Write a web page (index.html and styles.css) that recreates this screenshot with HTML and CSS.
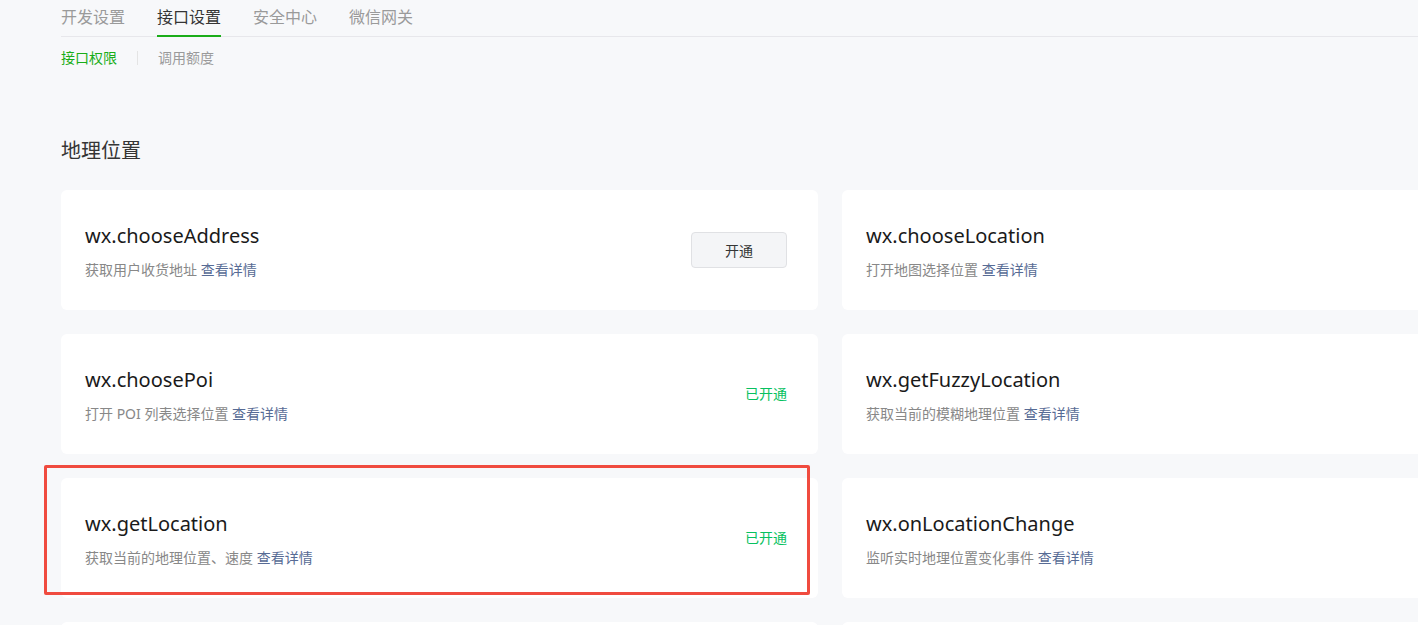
FILE: index.html
```html
<!DOCTYPE html>
<html lang="zh-CN">
<head>
<meta charset="utf-8">
<title>接口设置</title>
<link rel="stylesheet" href="styles.css">
</head>
<body>
<div class="page">
  <nav class="tabs">
    <a class="tab">开发设置</a>
    <a class="tab active">接口设置</a>
    <a class="tab">安全中心</a>
    <a class="tab">微信网关</a>
  </nav>
  <div class="subtabs">
    <a class="subtab active">接口权限</a>
    <span class="sep"></span>
    <a class="subtab">调用额度</a>
  </div>
  <h2 class="section-title">地理位置</h2>
  <div class="grid">
    <div class="card">
      <div class="info">
        <div class="api">wx.chooseAddress</div>
        <div class="desc">获取用户收货地址 <a class="link">查看详情</a></div>
      </div>
      <button class="btn">开通</button>
    </div>
    <div class="card">
      <div class="info">
        <div class="api">wx.chooseLocation</div>
        <div class="desc">打开地图选择位置 <a class="link">查看详情</a></div>
      </div>
    </div>
    <div class="card">
      <div class="info">
        <div class="api">wx.choosePoi</div>
        <div class="desc">打开 POI 列表选择位置 <a class="link">查看详情</a></div>
      </div>
      <span class="status">已开通</span>
    </div>
    <div class="card">
      <div class="info">
        <div class="api">wx.getFuzzyLocation</div>
        <div class="desc">获取当前的模糊地理位置 <a class="link">查看详情</a></div>
      </div>
    </div>
    <div class="card highlighted">
      <div class="info">
        <div class="api">wx.getLocation</div>
        <div class="desc">获取当前的地理位置、速度 <a class="link">查看详情</a></div>
      </div>
      <span class="status">已开通</span>
      <span class="mark"></span>
    </div>
    <div class="card">
      <div class="info">
        <div class="api">wx.onLocationChange</div>
        <div class="desc">监听实时地理位置变化事件 <a class="link">查看详情</a></div>
      </div>
    </div>
    <div class="card"></div>
    <div class="card"></div>
  </div>
</div>
</body>
</html>
```

FILE: styles.css
```css
html, body {
  margin: 0;
  padding: 0;
  background: #f7f8fa;
  overflow: hidden;
  height: 100%;
}
body {
  font-family: "Noto Sans", "Noto Sans CJK SC", sans-serif;
  color: #353535;
}
.page {
  padding: 6px 0 0 61px;
}
.tabs {
  display: flex;
  gap: 32px;
  border-bottom: 1px solid #e7e7eb;
}
.tab {
  font-size: 16px;
  line-height: 22px;
  padding-bottom: 7px;
  border-bottom: 2px solid transparent;
  margin-bottom: -1px;
  color: #9a9a9a;
}
.tab.active {
  color: #353535;
  border-bottom-color: #1aad19;
}
.subtabs {
  display: flex;
  align-items: center;
  margin-top: 11px;
  height: 20px;
}
.subtab {
  font-size: 14px;
  line-height: 20px;
  color: #9a9a9a;
}
.subtab.active {
  color: #1aad19;
}
.sep {
  width: 1px;
  height: 14px;
  background: #e4e4e4;
  margin: 0 20px;
}
.section-title {
  margin: 69px 0 0;
  font-size: 20px;
  font-weight: normal;
  line-height: 28px;
  color: #353535;
}
.grid {
  margin-top: 25px;
  display: grid;
  grid-template-columns: 757px 757px;
  grid-auto-rows: 120px;
  gap: 24px;
  width: 1538px;
}
.card {
  position: relative;
  background: #fff;
  border-radius: 6px;
  padding: 0 31px 0 24px;
  display: flex;
  align-items: center;
  justify-content: space-between;
  box-sizing: border-box;
}
.info {
  display: flex;
  flex-direction: column;
  gap: 10px;
  margin-top: 2px;
}
.api {
  font-size: 20px;
  line-height: 28px;
  color: #1a1a1a;
}
.desc {
  font-size: 14px;
  line-height: 20px;
  color: #888;
}
.link {
  color: #576b95;
}
.btn {
  width: 96px;
  height: 36px;
  border: 1px solid #e0e1e4;
  border-radius: 4px;
  background: #f4f5f7;
  font-family: inherit;
  font-size: 14px;
  color: #353535;
}
.status {
  font-size: 14px;
  line-height: 20px;
  color: #07c160;
}
.mark {
  position: absolute;
  left: -17px;
  top: -13px;
  width: 766px;
  height: 130px;
  border: 3px solid #f04b3f;
  border-radius: 2px;
  box-sizing: border-box;
  pointer-events: none;
}
```
